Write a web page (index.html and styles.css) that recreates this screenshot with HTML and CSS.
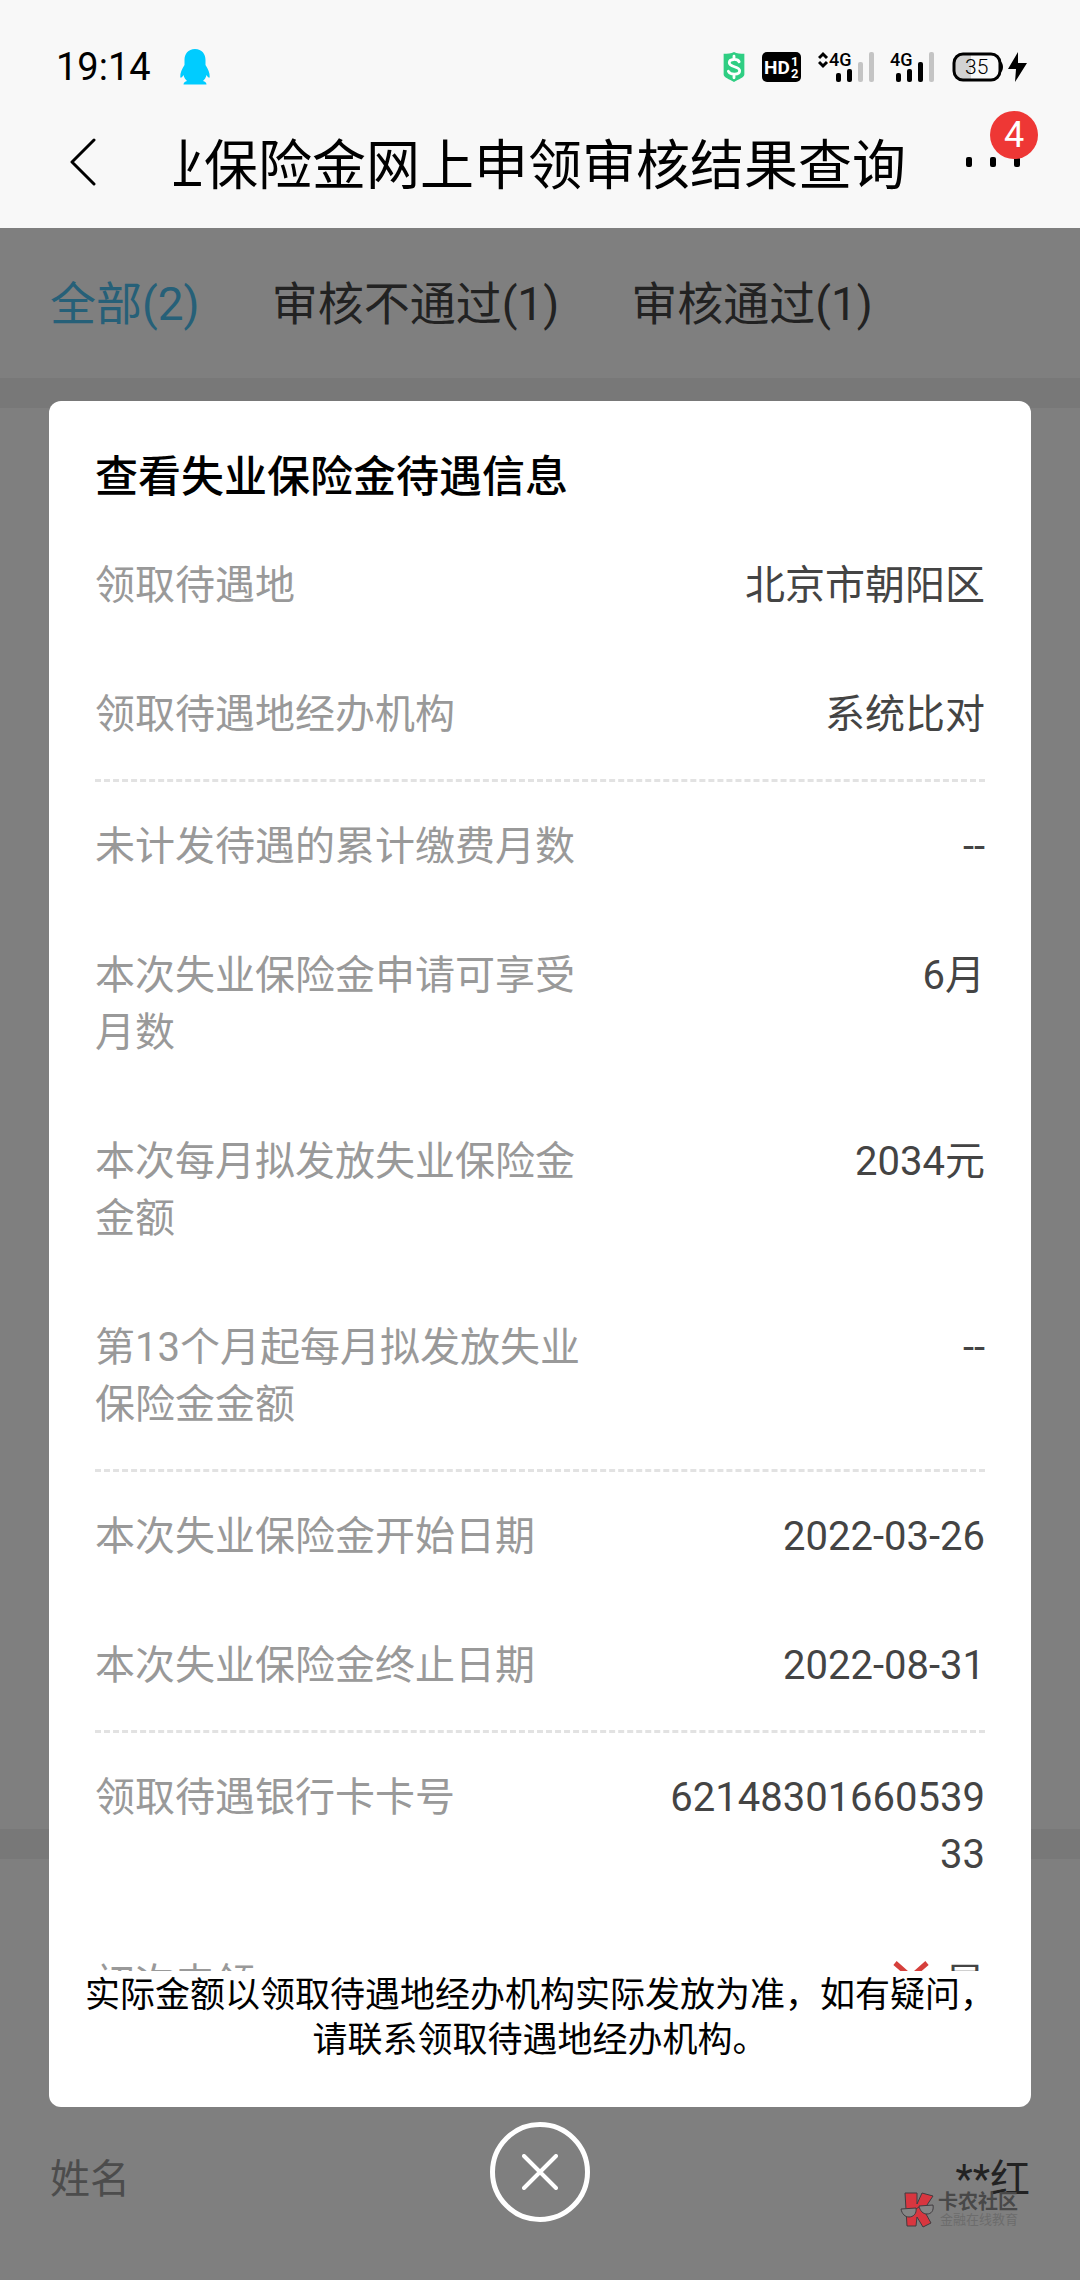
FILE: index.html
```html
<!DOCTYPE html>
<html lang="zh-CN">

<head>
    <meta charset="UTF-8">
    <meta name="viewport" content="width=device-width, initial-scale=1">
    <title>失业保险金网上申领审核结果查询</title>
    <link rel="stylesheet" href="styles.css">
</head>

<body>

    <header class="header">
        <div class="status">
            <span class="time">19:14</span>
            <svg class="qq" width="30" height="36" viewBox="0 0 30 36">
                <path fill="#0cf" d="M15 0C8 0 4.500 5 4.500 11v5C2 20 0 24 .3 28c.2 1.500 1.700.5 3.200-2 .5 2.500 2 4.500 3.500 6-2 .7-3.500 1.500-3.500 3.500h23c0-2-1.500-2.800-3.500-3.500 1.500-1.500 3-3.500 3.500-6 1.500 2.500 3 3.500 3.200 2 .3-4-1.700-8-4.200-12v-5C25.500 5 22 0 15 0z"/>
            </svg>
            <div class="status-icons">
                <svg width="24" height="32" viewBox="0 0 24 34">
                    <path fill="#2fce83" d="M12 1c3 1.500 7 2 11 2v22c0 3-6 5-11 8C7 30 1 28 1 25V3c4 0 8-.5 11-2z"/>
                    <path fill="none" stroke="#fff" stroke-width="3" stroke-linecap="round" d="M17.500 11.500C16 8 7 8 7 12.500c0 5 11 3.500 11 8.500 0 4.500-10 5-12 .5M12 5.500v3M12 25.500v3"/>
                </svg>
                <svg class="hd" width="40" height="32" viewBox="0 0 40 32">
                    <rect width="39" height="30" y="1" rx="5"/>
                    <text x="2" y="23" font-size="19" fill="#fff">HD</text>
                    <text x="29" y="15" font-size="13" fill="#fff">1</text>
                    <text x="29" y="27" font-size="13" fill="#fff">2</text>
                </svg>
                <svg class="signal" width="56" height="32" viewBox="0 0 56 32">
                    <path fill="none" stroke="#000" stroke-width="3" d="M1 7l4-4 4 4M1 11l4 4 4-4"/>
                    <text x="11" y="15" font-size="18">4G</text>
                    <rect x="18" y="22" width="5" height="9" rx="2"/>
                    <rect x="29" y="18" width="5" height="13" rx="2"/>
                    <rect x="40" y="11" width="5" height="20" rx="2" fill="#c4c4c4"/>
                    <rect x="51" y="1" width="5" height="30" rx="2" fill="#c4c4c4"/>
                </svg>
                <svg class="signal" width="44" height="32" viewBox="0 0 44 32">
                    <text x="0" y="15" font-size="18">4G</text>
                    <rect x="6" y="22" width="5" height="9" rx="2"/>
                    <rect x="17" y="18" width="5" height="13" rx="2"/>
                    <rect x="28" y="11" width="5" height="20" rx="2"/>
                    <rect x="39" y="1" width="5" height="30" rx="2" fill="#c4c4c4"/>
                </svg>
                <svg class="battery" width="76" height="32" viewBox="0 0 76 32">
                    <path fill="#d2d2d2" d="M11 3h8v26h-8c-5 0-9-3-9-8V11c0-5 4-8 9-8z"/>
                    <rect x="2" y="3" width="46" height="26" rx="9" fill="none" stroke="#000" stroke-width="3"/>
                    <path d="M48 10c4 2 4 10 0 12z"/>
                    <text x="13" y="23" font-size="21">35</text>
                    <path d="M66 1L56 18h8l-1 13 12-19h-9z"/>
                </svg>
            </div>
        </div>
        <div class="nav">
            <button class="back" aria-label="返回">
                <svg width="26" height="48" viewBox="0 0 26 48">
                    <path fill="none" stroke="#000" stroke-width="3" stroke-linecap="round" stroke-linejoin="round" d="M24 2L2 24l22 22"/>
                </svg>
            </button>
            <h1 class="nav-title">业保险金网上申领审核结果查询</h1>
            <button class="more" aria-label="更多">
                <svg width="54" height="10" viewBox="0 0 54 10">
                    <rect x="0" width="6" height="10" rx="2"/>
                    <rect x="24" width="6" height="10" rx="2"/>
                    <rect x="48" width="6" height="10" rx="2"/>
                </svg>
                <span class="badge">4</span>
            </button>
        </div>
    </header>

    <main class="main">
        <nav class="tabs">
            <a href="#" class="tab active">全部(2)</a>
            <a href="#" class="tab">审核不通过(1)</a>
            <a href="#" class="tab">审核通过(1)</a>
        </nav>
        <section class="card"></section>
        <section class="card person">
            <span class="person-label">姓名</span>
            <span class="person-value">**红</span>
        </section>

        <div class="overlay">
            <div class="modal" role="dialog" aria-labelledby="modal-title">
                <h2 class="modal-title" id="modal-title">查看失业保险金待遇信息</h2>
                <div class="modal-body">
                    <dl class="group">
                        <div class="row">
                            <dt>领取待遇地</dt>
                            <dd>北京市朝阳区</dd>
                        </div>
                        <div class="row">
                            <dt>领取待遇地经办机构</dt>
                            <dd>系统比对</dd>
                        </div>
                    </dl>
                    <dl class="group">
                        <div class="row">
                            <dt>未计发待遇的累计缴费月数</dt>
                            <dd>--</dd>
                        </div>
                        <div class="row">
                            <dt>本次失业保险金申请可享受月数</dt>
                            <dd>6月</dd>
                        </div>
                        <div class="row">
                            <dt>本次每月拟发放失业保险金金额</dt>
                            <dd>2034元</dd>
                        </div>
                        <div class="row">
                            <dt>第13个月起每月拟发放失业保险金金额</dt>
                            <dd>--</dd>
                        </div>
                    </dl>
                    <dl class="group">
                        <div class="row">
                            <dt>本次失业保险金开始日期</dt>
                            <dd>2022-03-26</dd>
                        </div>
                        <div class="row">
                            <dt>本次失业保险金终止日期</dt>
                            <dd>2022-08-31</dd>
                        </div>
                    </dl>
                    <dl class="group">
                        <div class="row">
                            <dt>领取待遇银行卡卡号</dt>
                            <dd>6214830166053933</dd>
                        </div>
                        <div class="row">
                            <dt>初次申领</dt>
                            <dd class="flag">
                                <svg width="36" height="48" viewBox="0 0 36 48">
                                    <path fill="none" stroke="#d6403c" stroke-width="5" d="M2 3l16 14L34 3M2 31l16-14 16 14"/>
                                </svg>
                                是
                            </dd>
                        </div>
                    </dl>
                </div>
                <p class="notice">实际金额以领取待遇地经办机构实际发放为准，如有疑问，请联系领取待遇地经办机构。</p>
            </div>
            <button class="close" aria-label="关闭">
                <svg width="36" height="36" viewBox="0 0 36 36">
                    <path stroke="#fff" stroke-width="4" stroke-linecap="round" d="M2 2l32 32M34 2L2 34"/>
                </svg>
            </button>
        </div>

        <div class="brand">
            <svg width="34" height="36" viewBox="0 0 34 36">
                <path fill="#d8363f" stroke="#403c40" stroke-width="1" d="M5 1h12v11L22 1l11 3-8 12 1 6 5 9-8 4-6-10-1 9H7z"/>
                <path fill="#858585" stroke="#403c40" stroke-width="1" d="M1 17l15-1c1 6-3 9-7 9s-7-3-8-8zM19 14l14-1c1 6-2 9-6 9s-7-3-8-8z"/>
                <path fill="none" stroke="#403c40" stroke-width="1" d="M16 17l3-2"/>
            </svg>
            <div class="brand-text">
                <b>卡农社区</b>
                <small>金融在线教育</small>
            </div>
        </div>
    </main>

</body>

</html>
```

FILE: styles.css
```css
* {
  box-sizing: border-box;
}

body, h1, h2, dl, dd, p {
  margin: 0;
}

body {
  display: flex;
  flex-direction: column;
  min-height: 100vh;
  font-family: Roboto, "Noto Sans CJK SC", sans-serif;
  font-size: 40px;
  background: #f0f0f0;
}

button {
  padding: 0;
  border: 0;
  background: none;
  font: inherit;
}

svg {
  display: block;
}

/* header */
.header {
  background: #f8f8f8;
}

.status {
  display: flex;
  align-items: center;
  padding: 32px 52px 0 56px;
  height: 101px;
}

.time {
  font-size: 38px;
}

.qq {
  margin-left: 29px;
}

.status-icons {
  display: flex;
  align-items: center;
  gap: 16px;
  margin-left: auto;
}

.hd {
  font-weight: bold;
}

.signal {
  font-weight: 500;
}

.battery {
  margin-left: 2px;
  font-weight: 300;
}

.nav {
  display: flex;
  align-items: center;
  height: 127px;
  padding: 0 60px 6px 70px;
}

.back {
  width: 104px;
}

.nav-title {
  flex: 1;
  display: flex;
  justify-content: flex-end;
  overflow: hidden;
  white-space: nowrap;
  font-size: 54px;
  font-weight: 400;
}

.more {
  position: relative;
  margin-left: 60px;
}

.badge {
  position: absolute;
  right: -18px;
  bottom: 8px;
  width: 48px;
  height: 48px;
  border-radius: 50%;
  background: #ee3735;
  color: #fff;
  font-size: 36px;
  line-height: 48px;
}

/* page under the overlay */
.main {
  position: relative;
  flex: 1;
  display: flex;
  flex-direction: column;
}

.tabs {
  display: flex;
  align-items: center;
  gap: 72px;
  height: 150px;
  padding: 0 50px 6px;
  background: #fff;
  font-size: 46px;
}

.tab {
  color: #444;
  text-decoration: none;
}

.active {
  color: #4cc0f0;
}

.card {
  flex: 1;
  margin-top: 30px;
  background: #fff;
}

.person {
  flex: none;
  display: flex;
  justify-content: space-between;
  padding: 292px 50px 72px;
  line-height: 57px;
}

.person-label {
  color: #999;
}

.person-value {
  color: #444;
}

/* dialog */
.overlay {
  position: absolute;
  inset: 0;
  display: flex;
  flex-direction: column;
  align-items: center;
  padding: 173px 49px 58px;
  background: rgba(0, 0, 0, .5);
}

.modal {
  flex: 1;
  display: flex;
  flex-direction: column;
  width: 100%;
  min-height: 0;
  padding: 46px 46px 44px;
  border-radius: 12px;
  background: #fff;
}

.modal-title {
  margin-bottom: 14px;
  font-size: 43px;
  font-weight: 500;
  line-height: 60px;
}

.modal-body {
  flex: 1 1 0;
  min-height: 0;
  overflow: hidden;
}

.group + .group {
  border-top: 3px dashed #e2e2e2;
}

.row {
  display: flex;
  justify-content: space-between;
  padding: 36px 0;
  line-height: 57px;
}

dt {
  width: 55%;
  color: #999;
}

dd {
  width: 37%;
  color: #444;
  text-align: right;
  word-break: break-all;
}

.flag {
  display: flex;
  justify-content: flex-end;
  align-items: center;
  gap: 16px;
}

.notice {
  margin: 2px -10px 0;
  font-size: 35px;
  line-height: 45px;
  text-align: center;
}

.close {
  display: flex;
  align-items: center;
  justify-content: center;
  width: 100px;
  height: 100px;
  margin-top: 15px;
  border: 5px solid #fff;
  border-radius: 50%;
}

/* community mark */
.brand {
  position: absolute;
  right: 62px;
  bottom: 52px;
  display: flex;
  align-items: center;
  gap: 4px;
}

.brand-text {
  display: flex;
  flex-direction: column;
  color: #484848;
  font-size: 20px;
  line-height: 20px;
}

.brand-text small {
  color: #6c6c6c;
  font-size: 13px;
  line-height: 16px;
  text-align: right;
}
```
